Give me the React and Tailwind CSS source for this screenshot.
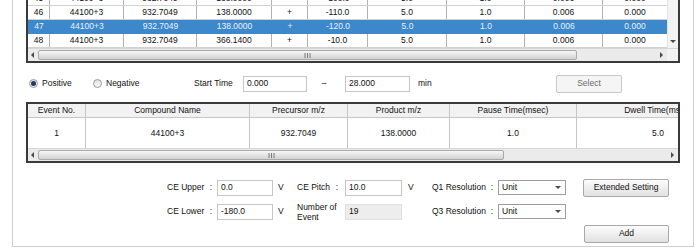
import React from 'react';
import clsx from 'clsx';

const topCols = ['w-[22px]', 'w-[74px]', 'w-[73px]', 'w-[75px]', 'w-[36px]', 'w-[60px]', 'w-[79px]', 'w-[78px]', 'w-[78px]', 'w-[64px]'];

const topRows = [
    ['45', '44100+3', '932.7049', '138.0000', '+', '-100.0', '5.0', '1.0', '0.006', '0.000'],
    ['46', '44100+3', '932.7049', '138.0000', '+', '-110.0', '5.0', '1.0', '0.006', '0.000'],
    ['47', '44100+3', '932.7049', '138.0000', '+', '-120.0', '5.0', '1.0', '0.006', '0.000'],
    ['48', '44100+3', '932.7049', '366.1400', '+', '-10.0', '5.0', '1.0', '0.006', '0.000'],
];

const eventCols = [
    { w: 'w-[58px]', head: 'Event No.', value: '1' },
    { w: 'w-[164px]', head: 'Compound Name', value: '44100+3' },
    { w: 'w-[98px]', head: 'Precursor m/z', value: '932.7049' },
    { w: 'w-[102px]', head: 'Product m/z', value: '138.0000' },
    { w: 'w-[127px]', head: 'Pause Time(msec)', value: '1.0' },
    { w: 'w-[163px]', head: 'Dwell Time(msec)', value: '5.0' },
];

const Arrow = ({ dir }) => {
    const pts = {
        left: '4,0 4,6 1,3',
        right: '1,0 1,6 4,3',
        down: '0,1 6,1 3,4',
    }[dir];
    return (
        <svg width="6" height="6" viewBox="0 0 6 6" className="block">
            <polygon points={pts} fill="#4a4a4a" />
        </svg>
    );
};

const Grip = () => (
    <svg width="7" height="5" viewBox="0 0 7 5" className="block">
        <path d="M1 0v5M3.5 0v5M6 0v5" stroke="#777" strokeWidth="1" />
    </svg>
);

const Radio = ({ checked }) => (
    <span className="w-[9px] h-[9px] rounded-full border border-[#9a9a9a] bg-gradient-to-b from-[#e2e2e2] to-[#f8f8f8] flex items-center justify-center">
        {checked && <span className="w-[5px] h-[5px] rounded-full bg-[#1d3b66]" />}
    </span>
);

const Field = ({ value, w, disabled }) => (
    <div
        className={clsx(
            'h-[16px] border px-[3px] flex items-center',
            w,
            disabled ? 'bg-[#ededed] border-[#e0e0e0]' : 'bg-white border-[#c6c6c6]'
        )}
    >
        {value}
    </div>
);

const Dropdown = () => (
    <div className="w-[68px] h-[15px] border border-[#9c9c9c] bg-white flex items-center justify-between pl-[3px] pr-[4px]">
        <span>Unit</span>
        <Arrow dir="down" />
    </div>
);

const Button = ({ children, w }) => (
    <div className={clsx('h-[18px] rounded-[2px] border border-[#a8a8a8] bg-gradient-to-b from-[#fdfdfd] to-[#e1e1e1] flex items-center justify-center', w)}>
        {children}
    </div>
);

const Label = ({ text, w }) => (
    <div className={clsx('flex justify-between', w)}>
        <span>{text}</span>
        <span>:</span>
    </div>
);

export default function App() {
    return (
        <div className="w-[700px] h-[248px] bg-white overflow-hidden font-['Liberation_Sans',Arial,sans-serif] text-[8.5px] leading-none text-[#111]">
            <div className="ml-[12px] w-[682px] h-[247px] border-x border-b border-[#cfcfcf] pl-[13px]">
                {/* Event list, scrolled down so row 45 is only partly in view */}
                <div className="w-[654px] border-x-2 border-b-2 border-[#3a3a3a] bg-white">
                    <div className="flex h-[48px]">
                        <div className="w-[639px] overflow-hidden">
                            <div className="-mt-[8px]">
                                {topRows.map((row, i) => {
                                    const sel = row[0] === '47';
                                    return (
                                        <div
                                            key={i}
                                            className={clsx(
                                                'flex h-[14px] border-b',
                                                sel ? 'bg-[#3d87cb] border-[#3d87cb] text-[#e9f1fb]' : 'border-[#d2d2d2]'
                                            )}
                                        >
                                            {row.map((v, j) => (
                                                <div
                                                    key={j}
                                                    className={clsx(
                                                        topCols[j],
                                                        'h-full flex items-center justify-center',
                                                        !sel && j < 9 && 'border-r border-[#b2b2b2]'
                                                    )}
                                                >
                                                    {v}
                                                </div>
                                            ))}
                                        </div>
                                    );
                                })}
                            </div>
                        </div>
                        <div className="w-[11px] bg-[#f3f3f3] border-l border-[#e4e4e4] flex flex-col justify-end items-center pb-[3px]">
                            <Arrow dir="down" />
                        </div>
                    </div>
                    <div className="flex h-[13px] bg-[#ebebeb] border-t border-[#d6d6d6]">
                        <div className="w-[10px] flex items-center justify-center">
                            <Arrow dir="left" />
                        </div>
                        <div className="w-[539px] my-[1px] rounded-[2px] border border-[#a9a9a9] bg-gradient-to-b from-[#f7f7f7] to-[#d2d2d2] flex items-center justify-center">
                            <Grip />
                        </div>
                        <div className="w-[79px]" />
                        <div className="w-[11px] flex items-center justify-center">
                            <Arrow dir="right" />
                        </div>
                        <div className="w-[11px] bg-[#f3f3f3]" />
                    </div>
                </div>

                {/* Polarity & time range */}
                <div className="mt-[11px] h-[19px] flex items-center">
                    <div className="w-[67px] pl-[3px] flex items-center gap-[4px]">
                        <Radio checked />
                        <span>Positive</span>
                    </div>
                    <div className="w-[101px] flex items-center gap-[4px]">
                        <Radio />
                        <span>Negative</span>
                    </div>
                    <div className="w-[49px]">Start Time</div>
                    <Field value="0.000" w="w-[64px]" />
                    <div className="w-[34px] text-center">–</div>
                    <div className="ml-[4px]">
                        <Field value="28.000" w="w-[65px]" />
                    </div>
                    <div className="ml-[8px] w-[138px]">min</div>
                    <div className="w-[66px] h-[18px] rounded-[2px] border border-[#c9c9c9] bg-[#f5f5f5] flex items-center justify-center text-[#6b6b6b]">
                        Select
                    </div>
                </div>

                {/* Event detail table */}
                <div className="mt-[9px] w-[654px] border-2 border-[#3a3a3a] overflow-hidden">
                    <div className="flex h-[14px] bg-[#f2f2f2] border-b border-[#c6c6c6]">
                        {eventCols.map((c) => (
                            <div key={c.head} className={clsx(c.w, 'shrink-0 h-full border-r border-[#c6c6c6] flex items-center justify-center whitespace-nowrap')}>
                                {c.head}
                            </div>
                        ))}
                    </div>
                    <div className="flex h-[30px]">
                        {eventCols.map((c) => (
                            <div key={c.head} className={clsx(c.w, 'shrink-0 h-full border-r border-[#c6c6c6] flex items-center justify-center')}>
                                {c.value}
                            </div>
                        ))}
                    </div>
                    <div className="flex h-[13px] bg-[#ebebeb] border-t border-[#d6d6d6]">
                        <div className="w-[10px] flex items-center justify-center">
                            <Arrow dir="left" />
                        </div>
                        <div className="w-[466px] my-[1px] rounded-[2px] border border-[#a9a9a9] bg-gradient-to-b from-[#f7f7f7] to-[#d2d2d2] flex items-center justify-center">
                            <Grip />
                        </div>
                        <div className="w-[163px]" />
                        <div className="w-[11px] flex items-center justify-center">
                            <Arrow dir="right" />
                        </div>
                    </div>
                </div>

                {/* CE settings */}
                <div className="ml-[141px] mt-[15px] h-[19px] flex items-center">
                    <Label text="CE Upper" w="w-[45px]" />
                    <div className="ml-[5px]">
                        <Field value="0.0" w="w-[56px]" />
                    </div>
                    <div className="ml-[5px] w-[19px]">V</div>
                    <Label text="CE Pitch" w="w-[41px]" />
                    <div className="ml-[7px]">
                        <Field value="10.0" w="w-[57px]" />
                    </div>
                    <div className="ml-[6px] w-[24px]">V</div>
                    <Label text="Q1 Resolution" w="w-[61px]" />
                    <div className="ml-[5px]">
                        <Dropdown />
                    </div>
                    <div className="ml-[17px]">
                        <Button w="w-[86px]">Extended Setting</Button>
                    </div>
                </div>
                <div className="ml-[141px] mt-[5px] h-[19px] flex items-center">
                    <Label text="CE Lower" w="w-[45px]" />
                    <div className="ml-[5px]">
                        <Field value="-180.0" w="w-[56px]" />
                    </div>
                    <div className="ml-[5px] w-[19px]">V</div>
                    <div className="w-[41px] leading-[10px]">
                        Number of
                        <br />
                        Event
                    </div>
                    <div className="ml-[7px]">
                        <Field value="19" w="w-[57px]" disabled />
                    </div>
                    <div className="ml-[6px] w-[24px]" />
                    <Label text="Q3 Resolution" w="w-[61px]" />
                    <div className="ml-[5px]">
                        <Dropdown />
                    </div>
                </div>
                <div className="ml-[558px] mt-[3px] h-[19px] flex items-center">
                    <Button w="w-[85px]">Add</Button>
                </div>
            </div>
        </div>
    );
}
